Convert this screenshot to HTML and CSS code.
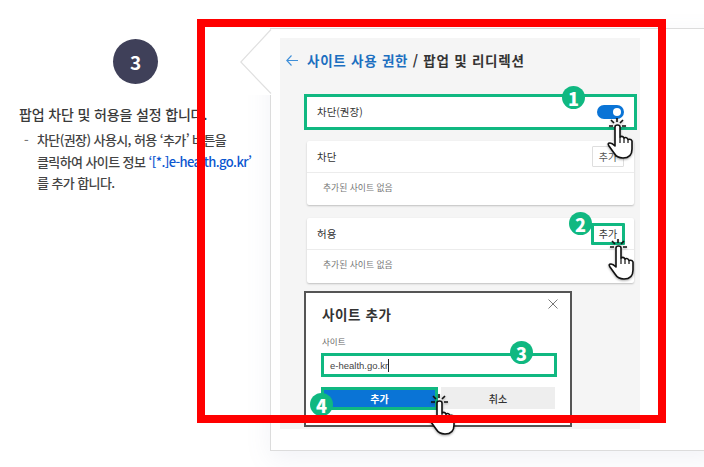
FILE: index.html
```html
<!DOCTYPE html>
<html lang="ko">
<head>
<meta charset="utf-8">
<title>팝업 및 리디렉션</title>
<link rel="stylesheet" href="styles.css">
</head>
<body>
<svg class="defs" width="0" height="0" aria-hidden="true">
  <symbol id="hand" viewBox="0 0 28 44">
    <path class="rays" d="M11 2V6M3 10H7M16 10H20M5 4L8 7M17 4L14 7"/>
    <path class="palm" d="M9 11Q9 9 11.500 9Q14 9 14 11L14 21Q16.500 19.500 18 22Q20.500 20.500 22 23.500Q25 22.500 26 25L26 33Q26 42 17 42Q11 42 8 37L3 30Q1 27 4 27Q6 27 9 30Z"/>
    <path class="knuckle" d="M14 21V27M18 22V27M22 23.500V27"/>
  </symbol>
</svg>
<main class="page">
  <section class="intro">
    <div class="step">3</div>
    <p class="lead">팝업 차단 및 허용을 설정 합니다.</p>
    <div class="note">
      <span class="dash">-</span>
      <p class="note-text">차단(권장) 사용시, 허용 ‘추가’ 버튼을<br>클릭하여 사이트 정보 <span class="link">‘[*.]e-health.go.kr’</span><br>를 추가 합니다.</p>
    </div>
  </section>
  <section class="sheet">
    <svg class="notch" width="32" height="66" viewBox="0 0 32 66" aria-hidden="true"><path d="M31 0.500L0.800 33L31 64.500"/></svg>
    <div class="settings">
      <h1 class="title">
        <svg class="back" width="12" height="11" viewBox="0 0 12 11" aria-hidden="true"><path d="M5.500 0.500L0.800 5.500L5.500 10.500M1 5.500H12"/></svg>
        <span class="title-text"><span class="title-link">사이트 사용 권한</span> / 팝업 및 리디렉션</span>
      </h1>
      <div class="row-block">
        <span class="row-label">차단(권장)</span>
        <span class="toggle"><span class="knob"></span></span>
      </div>
      <div class="card card-block">
        <div class="card-head"><span>차단</span><span class="add">추가</span></div>
        <div class="card-body">추가된 사이트 없음</div>
      </div>
      <div class="card card-allow">
        <div class="card-head"><span>허용</span><span class="add add-hot">추가</span></div>
        <div class="card-body">추가된 사이트 없음</div>
      </div>
      <div class="dialog">
        <div class="dialog-head">
          <h2 class="dialog-title">사이트 추가</h2>
          <svg class="close" width="10" height="10" viewBox="0 0 10 10" aria-hidden="true"><path d="M0.500 0.500L9.500 9.500M9.500 0.500L0.500 9.500"/></svg>
        </div>
        <div class="field-label">사이트</div>
        <div class="field"><span>e-health.go.kr</span><span class="caret"></span></div>
        <div class="actions">
          <span class="btn btn-primary">추가</span>
          <span class="btn btn-cancel">취소</span>
        </div>
      </div>
    </div>
  </section>
  <span class="badge badge-1">1</span>
  <span class="badge badge-2">2</span>
  <span class="badge badge-3">3</span>
  <span class="badge badge-4">4</span>
  <svg class="hand hand-1" aria-hidden="true"><use href="#hand"/></svg>
  <svg class="hand hand-2" aria-hidden="true"><use href="#hand"/></svg>
  <svg class="hand hand-3" aria-hidden="true"><use href="#hand"/></svg>
  <div class="red-frame"></div>
</main>
</body>
</html>
```
FILE: styles.css
```css
* { box-sizing: border-box; }
html, body { margin: 0; padding: 0; background: #fff; }
body { font-family: "Noto Sans CJK KR", "Noto Sans", sans-serif; color: #333; }
h1, h2, p { margin: 0; font-weight: inherit; }
.defs { position: absolute; }

.page {
  position: relative;
  display: flex;
  width: 704px;
  height: 467px;
  overflow: hidden;
}

/* left explanation column */
.intro { flex: none; width: 270px; padding: 39px 0 0 19px; }
.step {
  width: 45px; height: 45px; margin-left: 94px;
  display: flex; align-items: center; justify-content: center;
  border-radius: 50%;
  background: #3f4059; color: #fff;
  font-size: 19px; font-weight: 700;
}
.lead {
  margin-top: 18px;
  font-size: 14px; font-weight: 500; line-height: 24px; letter-spacing: -0.15px;
  color: #3a3a3a; white-space: nowrap;
}
.note { display: flex; margin-top: 3px; font-size: 13px; font-weight: 500; line-height: 21.500px; letter-spacing: -0.6px; color: #444; }
.dash { flex: none; width: 18px; padding-left: 5px; color: #777; }
.note-text { white-space: nowrap; }
.link { color: #0b56d0; }

/* right sheet */
.sheet {
  position: relative;
  flex: none;
  width: 450px;
  height: 423px;
  margin-top: 28px;
  padding: 9px 0 0 9px;
  background: #fff;
  border: 1px solid #dcdcdc;
  border-right: 0;
  box-shadow: 0 8px 24px rgba(120, 130, 170, 0.10);
}
.notch { position: absolute; left: -31px; top: 0; background: #fff; }
.notch path { fill: none; stroke: #e0e0e0; stroke-width: 1.200px; }

.settings { width: 360px; height: 391px; padding-top: 11px; background: #f5f5f5; }
.title {
  display: flex; align-items: center;
  height: 22px; padding-left: 6px;
  font-size: 13.500px; font-weight: 700; letter-spacing: 0.75px; color: #333;
}
.title-text { white-space: nowrap; }
.back { margin-right: 9px; }
.back path { fill: none; stroke: #3f8fd8; stroke-width: 1.100px; }
.title-link { color: #1c6fc0; }

.row-block {
  display: flex; align-items: center; justify-content: space-between;
  width: 333px; height: 36px; margin: 23px 0 0 24px;
  padding: 0 10px 0 10px;
  background: #fff;
  border: 3px solid #10b881;
  font-size: 10.500px; color: #333;
}
.row-label { margin-top: -2px; }
.toggle { display: flex; align-items: center; justify-content: flex-end; width: 27px; height: 14px; padding-right: 3px; border-radius: 7px; background: #0a74d6; }
.knob { width: 8px; height: 8px; border-radius: 50%; background: #fff; }

.card { width: 327px; margin-left: 27px; background: #fff; border-radius: 2px; box-shadow: 0 1px 2px rgba(0, 0, 0, 0.22); }
.card-block { height: 64px; margin-top: 11px; }
.card-allow { height: 65px; margin-top: 13px; }
.card-head {
  display: flex; align-items: center; justify-content: space-between;
  height: 32px; padding: 0 10px;
  border-bottom: 1px solid #ececec;
  font-size: 10.500px; color: #333;
}
.card-body { padding: 7px 0 0 16px; font-size: 8.800px; line-height: 16px; color: #777; }
.add {
  display: flex; align-items: center; justify-content: center;
  width: 32px; height: 21px;
  border: 1px solid #dedede; border-radius: 1px;
  font-size: 10px; color: #555;
}
.add-hot { width: 34px; height: 22px; margin-right: -1px; border: 3px solid #10b881; color: #333; }

.dialog {
  width: 268px; height: 136px; margin: 8px 0 0 24px;
  padding: 0 14px 0 16px;
  background: #fff;
  border: 2px solid #555;
}
.dialog-head { display: flex; justify-content: space-between; height: 42px; padding-top: 11px; }
.dialog-title { font-size: 13.500px; line-height: 20px; font-weight: 700; letter-spacing: 0.6px; color: #333; }
.close { margin-right: -2px; margin-top: -5px; }
.close path { stroke: #555; stroke-width: 0.800px; fill: none; }
.field-label { font-size: 8.500px; line-height: 12px; color: #666; }
.field {
  display: flex; align-items: center;
  width: 236px; height: 24px; margin: 6px 0 0 -1px;
  padding-left: 6px;
  border: 3px solid #10b881;
  font-family: "Liberation Sans", sans-serif; font-size: 9.500px; color: #444;
}
.caret { width: 1px; height: 13px; background: #222; }
.actions { display: flex; gap: 3px; margin: 10px 0 0 -1px; }
.btn { display: flex; align-items: center; justify-content: center; font-size: 10px; font-weight: 700; }
.btn-primary { width: 117px; height: 23px; background: #0a74d6; border: 3px solid #10b881; color: #fff; }
.btn-cancel { width: 114px; height: 22px; background: #eee; color: #333; font-weight: 500; }

/* annotations on top of the screenshot */
.badge {
  position: absolute;
  width: 23px; height: 23px;
  display: flex; align-items: center; justify-content: center;
  border-radius: 50%;
  background: #10b881; color: #fff;
  font-size: 18px; font-weight: 900;
}
.badge-1 { left: 562px; top: 86px; }
.badge-2 { left: 569px; top: 212px; }
.badge-3 { left: 510px; top: 341px; }
.badge-4 { left: 310px; top: 393px; }

.hand { position: absolute; width: 28px; height: 44px; overflow: visible; filter: drop-shadow(0 1px 1px rgba(0, 0, 0, 0.35)); }
.hand-1 { left: 606px; top: 116px; }
.hand-2 { left: 607px; top: 237px; }
.hand-3 { left: 428px; top: 392px; }
.rays { fill: none; stroke: #111; stroke-width: 1.600px; }
.palm { fill: #fff; stroke: #111; stroke-width: 1.600px; stroke-linejoin: round; }
.knuckle { fill: none; stroke: #111; stroke-width: 1.200px; }

.red-frame {
  position: absolute;
  left: 197px; top: 19px;
  width: 469px; height: 404px;
  border: 8px solid #ff0000;
}
```
